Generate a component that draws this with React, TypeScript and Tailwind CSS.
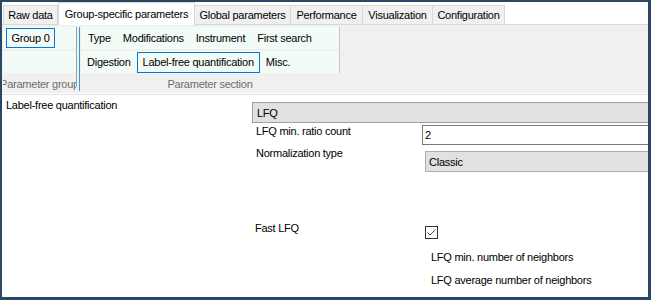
const TABS = [
  { label: "Raw data", w: "w-[55px]" },
  { label: "Group-specific parameters", w: "w-[137px]", active: true },
  { label: "Global parameters", w: "w-[96px]" },
  { label: "Performance", w: "w-[72px]" },
  { label: "Visualization", w: "w-[70px]" },
  { label: "Configuration", w: "w-[72px]" },
];

const ROW1 = ["Type", "Modifications", "Instrument", "First search"];

function Tab({ label, w, active }: { label: string; w: string; active?: boolean }) {
  if (active) {
    return (
      <div
        className={`${w} h-[23px] -mb-px flex justify-center pt-[4px] bg-white border-x border-t border-[#d9d9d9] whitespace-nowrap`}
      >
        {label}
      </div>
    );
  }
  return (
    <div
      className={`${w} h-[19px] flex items-center justify-center bg-[#f0f0f0] border-t border-r border-[#d9d9d9] first:border-l whitespace-nowrap`}
    >
      {label}
    </div>
  );
}

function RibbonItem({ label, selected }: { label: string; selected?: boolean }) {
  return (
    <div
      className={`h-[21px] flex items-center px-[5px] border whitespace-nowrap ${
        selected ? "border-[#0078d7]" : "border-transparent"
      }`}
    >
      {label}
    </div>
  );
}

function Check() {
  return (
    <div className="w-[13px] h-[13px] border border-[#333333] bg-white">
      <svg width="11" height="11" viewBox="0 0 11 11">
        <path d="M1.5 5.5 L4 8 L9.5 2.5" fill="none" stroke="#444" strokeWidth="1" />
      </svg>
    </div>
  );
}

export default function App() {
  return (
    <div className="w-[651px] h-[300px] overflow-hidden flex flex-col bg-white border-l-2 border-t-2 border-r-[3px] border-b-[3px] border-[#2c4764] font-['Liberation_Sans',Arial,sans-serif] text-[11px] leading-[14px] tracking-[-0.25px] text-black">
      {/* tab headers */}
      <div className="relative z-10 h-[22px] flex items-end pl-px shrink-0">
        {TABS.map((t) => (
          <Tab key={t.label} {...t} />
        ))}
      </div>

      {/* ribbon panel */}
      <div className="h-[69px] shrink-0 flex items-start pl-px pt-[2px] bg-[#f0f0f0] border-t border-[#d9d9d9]">
        <div className="w-[73px] flex flex-col gap-[2px]">
          <div className="h-[22px] flex items-center pl-[3px] bg-[#f2fbf6]">
            <div className="w-[49px] h-[20px] flex items-center justify-center border border-[#0078d7]">
              Group 0
            </div>
          </div>
          <div className="h-[22px] bg-[#f2fbf6]" />
          <div className="h-[18px] flex items-center justify-center overflow-hidden whitespace-nowrap text-[#6d6d6d]">
            Parameter group
          </div>
        </div>
        <div className="w-px h-[60px] bg-[#a0a0a0]" />
        <div className="w-[2px]" />
        <div className="w-px h-[64px] bg-[#3396e0]" />
        <div className="w-px" />
        <div className="w-[258px] flex flex-col gap-[2px]">
          <div className="h-[22px] flex items-center pl-px bg-[#f2fbf6]">
            {ROW1.map((r) => (
              <RibbonItem key={r} label={r} />
            ))}
          </div>
          <div className="h-[22px] flex items-center bg-[#f2fbf6]">
            <RibbonItem label="Digestion" />
            <RibbonItem label="Label-free quantification" selected />
            <RibbonItem label="Misc." />
          </div>
          <div className="h-[18px] flex items-center justify-center text-[#6d6d6d]">
            Parameter section
          </div>
        </div>
        <div className="w-px h-[46px] bg-[#c8c8c8]" />
      </div>

      <div className="h-px bg-white shrink-0" />
      <div className="h-px bg-[#e3e3e3] shrink-0" />

      {/* parameter form */}
      <div className="flex-1 flex">
        <div className="w-[250px] pl-[4px] pt-[3px]">Label-free quantification</div>
        <div className="flex-1 flex flex-col pt-[7px]">
          <div className="h-[21px] flex items-center pl-[4px] bg-[#e1e1e1] border-y border-l border-[#a0a0a0]">
            LFQ
          </div>
          <div className="h-[22px] flex items-start">
            <div className="w-[170px] pl-[4px] mt-px">LFQ min. ratio count</div>
            <div className="flex-1 h-[20px] mt-[2px] flex items-center pl-[2px] border border-r-0 border-[#7a7a7a]">
              2
            </div>
          </div>
          <div className="h-[75px] flex items-start">
            <div className="w-[173px] pl-[4px] mt-px">Normalization type</div>
            <div className="flex-1 h-[21px] mt-[6px] flex items-center pl-[3px] bg-[#e1e1e1] border border-r-0 border-[#adadad]">
              Classic
            </div>
          </div>
          <div className="h-[30px] flex items-start">
            <div className="w-[173px] pl-[3px] mt-px">Fast LFQ</div>
            <div className="mt-[6px]">
              <Check />
            </div>
          </div>
          <div className="h-[23px] pl-[179px]">LFQ min. number of neighbors</div>
          <div className="h-[23px] pl-[179px]">LFQ average number of neighbors</div>
        </div>
      </div>
    </div>
  );
}
